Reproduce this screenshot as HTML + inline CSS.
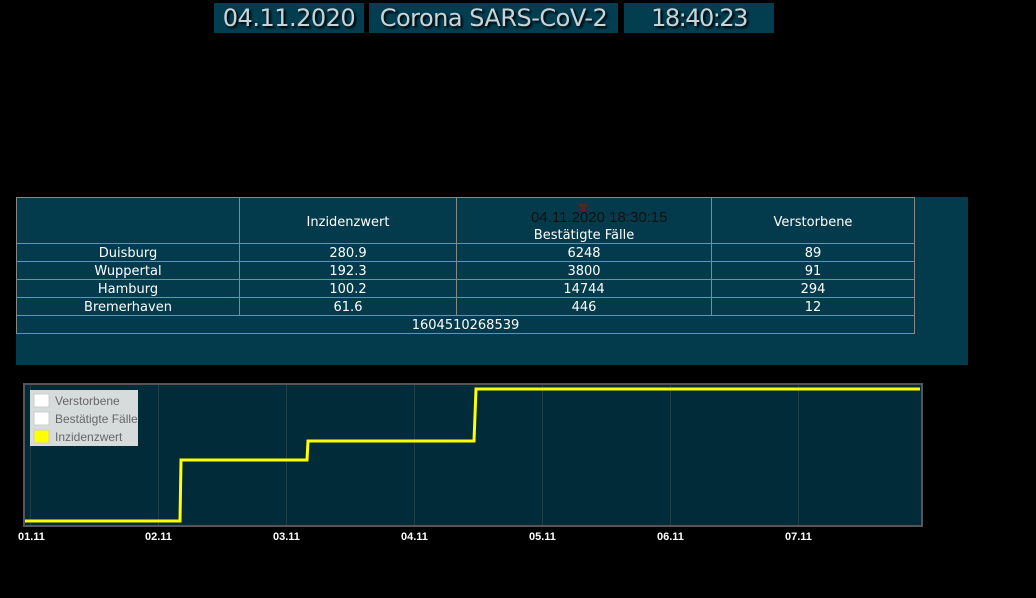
<!DOCTYPE html>
<html><head><style>
body{margin:0;width:1036px;height:598px;background:#000;position:relative;overflow:hidden;font-family:"DejaVu Sans","Liberation Sans",sans-serif;}
.h{position:absolute;top:3px;height:30px;background:#023d50;color:#c8d4d8;font-size:24px;line-height:31px;text-align:center;text-shadow:2px 2px 2px #000;letter-spacing:-0.5px}
#panel{position:absolute;left:16px;top:197px;width:952px;height:168px;background:#033b4d}
table{position:absolute;left:0;top:0;width:899px;border-collapse:collapse;color:#fff;font-size:13px}
td{border:1px solid #888;text-align:center;height:15px;padding:2px 0 0 0;line-height:15px;box-sizing:content-box}
.lbl{position:absolute;font-size:11px;font-weight:bold;color:#fff;font-family:"Liberation Sans",sans-serif;top:531px}
</style></head><body>
<div class="h" style="left:214px;width:150px">04.11.2020</div>
<div class="h" style="left:369px;width:249px">Corona SARS-CoV-2</div>
<div class="h" style="left:624px;width:150px;letter-spacing:-1.5px">18:40:23</div>
<div id="panel">
<table>
<tr><td style="width:222px;height:41px;padding-top:4px"></td><td style="width:216px;padding-top:4px;height:41px">Inzidenzwert</td><td style="width:254px;position:relative;vertical-align:bottom;height:43px"><span style="position:absolute;left:74px;top:12px;color:#111;font-family:'Liberation Sans',sans-serif;font-size:15px">04.11.2020 18:30:15</span><span style="position:absolute;left:120px;top:2px;color:#b00;font-size:14px">☣</span>Bestätigte Fälle</td><td style="padding-top:4px;height:41px">Verstorbene</td></tr>
<tr><td>Duisburg</td><td>280.9</td><td>6248</td><td>89</td></tr>
<tr><td>Wuppertal</td><td>192.3</td><td>3800</td><td>91</td></tr>
<tr><td>Hamburg</td><td>100.2</td><td>14744</td><td>294</td></tr>
<tr><td>Bremerhaven</td><td>61.6</td><td>446</td><td>12</td></tr>
<tr><td colspan="4">1604510268539</td></tr>
</table></div>
<svg style="position:absolute;left:0;top:0" width="1036" height="598">
<rect x="24" y="384" width="898" height="142" fill="#022b3a" stroke="#555" stroke-width="2"/>
<g stroke="#1d3f48" stroke-width="1">
<line x1="30.5" y1="385" x2="30.5" y2="525"/><line x1="158.5" y1="385" x2="158.5" y2="525"/><line x1="286.5" y1="385" x2="286.5" y2="525"/><line x1="414.5" y1="385" x2="414.5" y2="525"/><line x1="542.5" y1="385" x2="542.5" y2="525"/><line x1="670.5" y1="385" x2="670.5" y2="525"/><line x1="798.5" y1="385" x2="798.5" y2="525"/></g>
<polyline points="25,521 180,521 181,460 307,460 308,441 474,441 476,389 920,389" fill="none" stroke="#ff0" stroke-width="3"/>
<rect x="30" y="390" width="108" height="56" fill="#d6dcdc"/>
<rect x="34" y="394" width="15" height="13" fill="#fff" stroke="#ccc"/>
<rect x="34" y="412" width="15" height="13" fill="#fff" stroke="#ccc"/>
<rect x="34" y="430" width="15" height="13" fill="#ff0" stroke="#ccc"/>
<g font-family="Liberation Sans,sans-serif" font-size="12" fill="#666">
<text x="55" y="405">Verstorbene</text><text x="55" y="423">Bestätigte Fälle</text><text x="55" y="441">Inzidenzwert</text></g>
</svg>
<div class="lbl" style="left:18px">01.11</div>
<div class="lbl" style="left:145px">02.11</div>
<div class="lbl" style="left:273px">03.11</div>
<div class="lbl" style="left:401px">04.11</div>
<div class="lbl" style="left:529px">05.11</div>
<div class="lbl" style="left:657px">06.11</div>
<div class="lbl" style="left:785px">07.11</div>
</body></html>
